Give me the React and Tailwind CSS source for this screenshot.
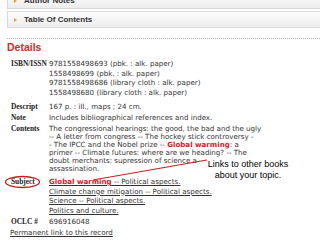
import React from 'react';

function Bar({ label, className }) {
  return (
    <div className={`flex items-center border border-r-0 border-[#d8d8d8] bg-linear-to-b from-[#fcfcfc] to-[#ededed] ${className}`}>
      <span className="ml-[6px] w-0 h-0 border-y-[2.5px] border-y-transparent border-l-[3px] border-l-[#f0a030]" />
      <span className="ml-[7px] font-['Liberation_Sans',sans-serif] font-bold text-[8px] text-[#333]">{label}</span>
    </div>
  );
}

function Row({ label, className, children }) {
  return (
    <div className={`flex ${className}`}>
      <div className="w-[39px] shrink-0 pl-[1px] font-['Liberation_Serif',serif] font-bold text-[7.4px] text-[#222]">{label}</div>
      <div className="text-[7.1px] text-[#333]">{children}</div>
    </div>
  );
}

export default function App() {
  return (
    <div className="relative w-[320px] h-[240px] overflow-hidden bg-white font-['DejaVu_Sans',sans-serif]">
      {/* Collapsed sections */}
      <div className="ml-[7px] -mt-[7px] flex flex-col gap-[2px]">
        <Bar label="Author Notes" className="h-[16px]" />
        <Bar label="Table Of Contents" className="h-[17px]" />
      </div>

      <div className="ml-[7px] mt-[10px] border-t border-dotted border-[#b8b8b8]" />

      <h2 className="ml-[7px] mt-[2px] font-['Liberation_Sans',sans-serif] font-bold text-[10.5px] leading-[12px] text-[#d42b2b]">Details</h2>

      {/* Record fields */}
      <div className="ml-[10px] mt-[6px]">
        <Row label="ISBN/ISSN" className="leading-[9.5px]">
          <div>9781558498693 (pbk. : alk. paper)</div>
          <div>1558498699 (pbk. : alk. paper)</div>
          <div>9781558498686 (library cloth : alk. paper)</div>
          <div>1558498680 (library cloth : alk. paper)</div>
        </Row>
        <Row label="Descript" className="leading-[9.5px] mt-[5px]">
          <div>167 p. : ill., maps ; 24 cm.</div>
        </Row>
        <Row label="Note" className="leading-[9.5px] mt-[1.5px]">
          <div>Includes bibliographical references and index.</div>
        </Row>
        <Row label="Contents" className="leading-[8px] mt-[2.25px]">
          <div>The congressional hearings: the good, the bad and the ugly</div>
          <div>-- A letter from congress -- The hockey stick controversy -</div>
          <div>- The IPCC and the Nobel prize -- <b className="text-[#d0201f]">Global warming</b>: a</div>
          <div>primer -- Climate futures: where are we heading? -- The</div>
          <div>doubt merchants: supression of science a</div>
          <div>assassination.</div>
        </Row>
        <Row label="Subject" className="leading-[9.5px] mt-[4.25px]">
          <div className="underline"><b className="text-[#d0201f]">Global warming</b> -- Political aspects.</div>
          <div className="underline">Climate change mitigation -- Political aspects.</div>
          <div className="underline">Science -- Political aspects.</div>
          <div className="underline">Politics and culture.</div>
        </Row>
        <Row label="OCLC #" className="leading-[9.5px] mt-[2px]">
          <div>696916048</div>
        </Row>
        <div className="mt-[1.5px] leading-[9.5px] text-[7.1px] text-[#333] underline">Permanent link to this record</div>
      </div>

      {/* Annotation overlay */}
      <svg className="absolute inset-0 pointer-events-none" width="320" height="240">
        <ellipse cx="22.5" cy="182" rx="17" ry="5.5" fill="none" stroke="#c81e1e" strokeWidth="1.3" />
        <line x1="93" y1="180" x2="207" y2="160" stroke="#d01e1e" strokeWidth="1.2" />
      </svg>
      <div className="absolute left-[202px] top-[159px] w-[92px] text-center font-['Liberation_Sans',sans-serif] text-[9px] leading-[11px] text-black">
        Links to other books<br />about your topic.
      </div>
    </div>
  );
}
